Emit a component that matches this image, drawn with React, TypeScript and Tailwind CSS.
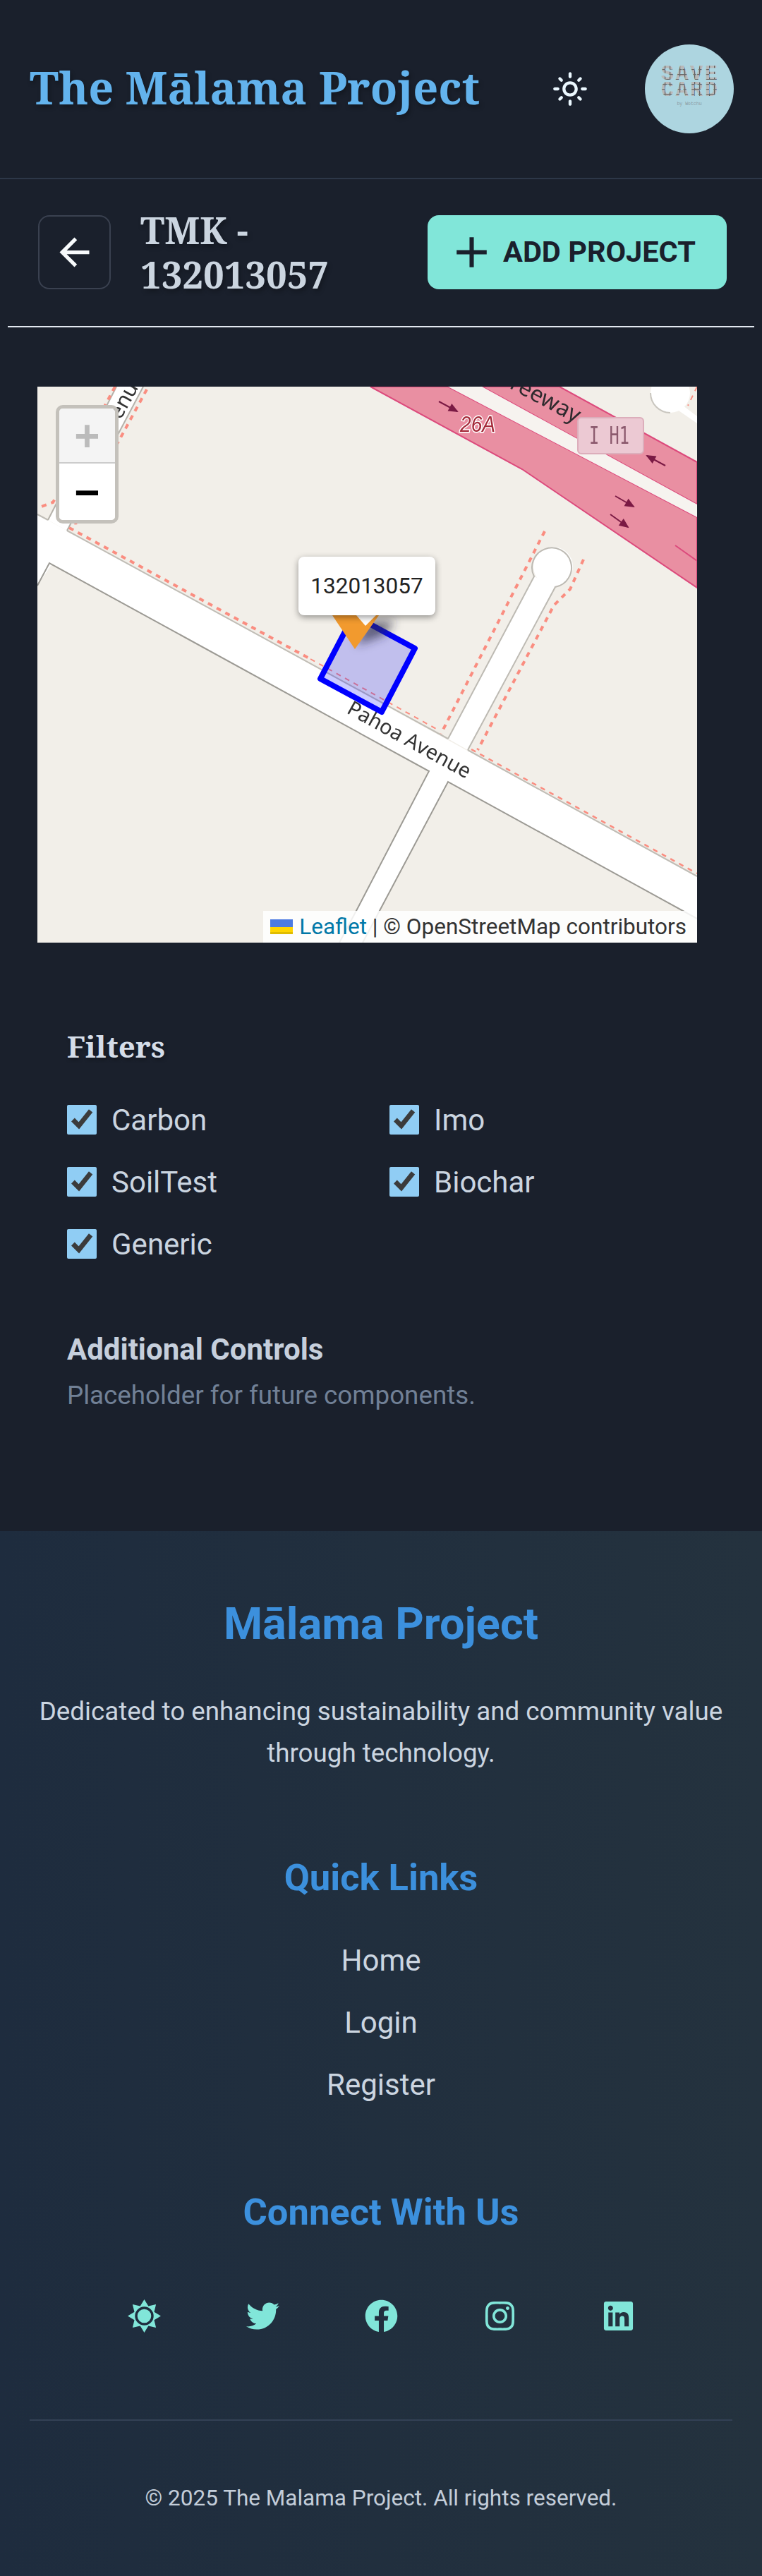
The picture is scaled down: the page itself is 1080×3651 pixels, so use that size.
import { MdOutlineLightMode, MdArrowBack, MdAdd } from "react-icons/md";
import { FaTwitter, FaFacebook, FaInstagram, FaLinkedin } from "react-icons/fa";

function Arrow({ x1, y1, x2, y2 }: { x1: number; y1: number; x2: number; y2: number }) {
  const a = Math.atan2(y2 - y1, x2 - x1);
  const p = (d: number, o: number) => `${x2 + Math.cos(a) * d - Math.sin(a) * o},${y2 + Math.sin(a) * d + Math.cos(a) * o}`;
  return (
    <g>
      <line x1={x1} y1={y1} x2={x2} y2={y2} stroke="#7a1a44" strokeWidth="2" />
      <polygon points={`${p(2, 0)} ${p(-12, 6)} ${p(-12, -6)}`} fill="#7a1a44" />
    </g>
  );
}

function SunBurst({ className }: { className?: string }) {
  const star = Array.from({ length: 16 }, (_, i) => {
    const r = i % 2 === 0 ? 24 : 15.5;
    const a = (i * Math.PI) / 8 - Math.PI / 2;
    return `${(r * Math.cos(a)).toFixed(2)},${(r * Math.sin(a)).toFixed(2)}`;
  });
  const ring = (r: number) => `M${-r},0 A${r},${r} 0 1 0 ${r},0 A${r},${r} 0 1 0 ${-r},0 Z`;
  return (
    <svg viewBox="-24 -24 48 48" className={className} fill="currentColor">
      <path fillRule="evenodd" d={`M${star.join(" L")} Z ${ring(13.5)} ${ring(10)}`} />
    </svg>
  );
}

function MapTiles() {
  return (
    <svg viewBox="53 548 935 788" className="absolute inset-0 w-full h-full blur-[0.7px]">
      <rect x="53" y="548" width="935" height="788" fill="#f2efe9" />
      {/* freeway */}
      <polygon points="525,548 635,548 988,733 988,833 740,665" fill="#e98fa2" stroke="#dc4a7c" strokeWidth="2" />
      <polygon points="683,548 793,548 988,655 988,715" fill="#e98fa2" stroke="#dc4a7c" strokeWidth="2" />
      <polygon points="635,548 683,548 988,715 988,733" fill="#f6f3ef" />
      <line x1="957" y1="773" x2="988" y2="795" stroke="#dc4a7c" strokeWidth="2" />
      {/* roads */}
      <g fill="#ffffff">
        <polygon points="53,729 988,1243 988,1303 53,789" />
        <polygon points="165,548 203,548 95,752 68,737" />
        <polygon points="53,770 80,790 53,830" />
        <polygon points="608,1093 635,1108 514,1336 481,1336" />
        <polygon points="635,1047 663,1063 787,832 757,817" />
        <circle cx="784" cy="803" r="28" />
        <circle cx="950" cy="557" r="28" />
        <polygon points="968,575 988,590 988,600 962,582" />
      </g>
      <g stroke="#a9a69f" strokeWidth="2" fill="none">
        <path d="M53,729 L68,737 M95,752 L635,1047 M663,1063 L988,1242" stroke="#c0bdb6" />
        <path d="M53,830 L70,798 L608,1093 L507,1287 L481,1336 M514,1336 L635,1108 L988,1302" stroke="#9c9a94" />
        <path d="M165,548 L68,737 M203,548 L95,752" stroke="#b5b2ab" />
        <path d="M635,1047 L757,817 A28,28 0 1 1 787,832 L663,1063" stroke="#bdbab3" />
        <path d="M950,585 A28,28 0 0 1 922,557" stroke="#c9c6bf" />
      </g>
      <g stroke="#fa8d80" fill="none" strokeWidth="4" strokeDasharray="7 7">
        <path d="M98,748 L440,934" />
        <path d="M440,934 L620,1034" strokeWidth="2" />
        <path d="M668,1062 L988,1238" strokeWidth="2.5" />
        <path d="M772,753 L625,1040" />
        <path d="M827,793 L808,835 L785,858 L677,1063" />
        <path d="M208,552 L107,738 L108,750" />
        <path d="M163,548 L82,700 L75,712 L53,720" />
        <path d="M988,548 L975,575" strokeWidth="2" />
      </g>
      <Arrow x1={622} y1={569} x2={648} y2={583} />
      <Arrow x1={872} y1={703} x2={898} y2={718} />
      <Arrow x1={865} y1={729} x2={890} y2={747} />
      <Arrow x1={943} y1={660} x2={917} y2={646} />
      <text x="652" y="612" fontFamily="'Liberation Sans',sans-serif" fontStyle="italic" fontSize="32" textLength="50" lengthAdjust="spacingAndGlyphs" fill="#a52a3a" stroke="#ffffff" strokeWidth="3" paintOrder="stroke">26A</text>
      <text x="816" y="600" textAnchor="end" transform="rotate(28 816 600)" fontFamily="'Noto Sans',sans-serif" fontSize="32" fill="#2f2a2e">Freeway</text>
      <rect x="819" y="592" width="93" height="51" rx="5" fill="#ecc9d3" stroke="#dcaebb" strokeWidth="2" />
      <text x="835" y="629" fontFamily="'DejaVu Sans Mono',monospace" fontSize="33" textLength="57" lengthAdjust="spacingAndGlyphs" fill="#8c5a6e">I H1</text>
      <text x="490" y="1010" transform="rotate(28.8 490 1010)" fontFamily="'Noto Sans',sans-serif" fontSize="29" fill="#333333" stroke="#ffffff" strokeWidth="3" paintOrder="stroke">Pahoa Avenue</text>
      <text x="154" y="626" transform="rotate(-61 154 626)" fontFamily="'Noto Sans',sans-serif" fontSize="30" fill="#333333" stroke="#ffffff" strokeWidth="3" paintOrder="stroke">Avenue</text>
    </svg>
  );
}

function MapOverlay() {
  return (
    <svg viewBox="53 548 935 788" className="absolute inset-0 w-full h-full">
      <defs>
        <filter id="sh" x="-50%" y="-50%" width="200%" height="200%">
          <feGaussianBlur stdDeviation="7" />
        </filter>
      </defs>
      <polygon points="454,962 541,1009 588,919 501,872" fill="#0000ff" fillOpacity="0.2" stroke="#0000ff" strokeWidth="8" strokeLinejoin="round" />
      <polygon points="505,915 520,880 560,880 545,900" fill="#2a2a40" fillOpacity="0.65" filter="url(#sh)" />
      <polygon points="471,872 537,872 503,920" fill="#f29a2e" />
      <polygon points="505,872 533,872 518,887" fill="#ffffff" />
    </svg>
  );
}

function Logo() {
  return (
    <svg viewBox="0 0 126 126" className="w-[126px] h-[126px] rounded-full shrink-0">
      <defs>
        <pattern id="px" width="7" height="7" patternUnits="userSpaceOnUse">
          <rect width="7" height="7" fill="#b8b8b8" />
          <rect width="1.2" height="7" fill="#5e5e5e" />
          <rect width="7" height="1.2" fill="#6a6a6a" />
        </pattern>
      </defs>
      <rect width="126" height="126" fill="#add5e0" />
      <g fontFamily="'Liberation Mono',monospace" fontWeight="700" fontSize="30" fill="url(#px)">
        <text x="23" y="50" textLength="80" lengthAdjust="spacing">SAVE</text>
        <text x="23" y="73" textLength="80" lengthAdjust="spacing">CARD</text>
      </g>
      <text x="63" y="86" textAnchor="middle" fontFamily="'Liberation Mono',monospace" fontSize="6.5" fill="#8a9aa2">by Wotchu</text>
    </svg>
  );
}

function Check({ label }: { label: string }) {
  return (
    <label className="flex items-center h-[88px] gap-[21px] text-[42px] text-[#cbd5e0]">
      <input type="checkbox" defaultChecked className="w-[42px] h-[42px] m-0 accent-[#90cdf4]" />
      <span>{label}</span>
    </label>
  );
}

export default function App() {
  return (
    <div className="w-full min-h-[3651px] bg-[#1a202c] font-['Roboto',sans-serif] text-[#cbd5e0]">
      <header className="flex items-center justify-between h-[254px] pl-[42px] pr-[40px] border-b-2 border-[#2d3748]">
        <h1 className="pb-[5px] font-['Noto_Serif',serif] font-bold text-[63px] leading-[76px] text-[#63b3ed] [text-shadow:2px_4px_6px_rgba(0,0,0,0.3)]">The Mālama Project</h1>
        <div className="flex items-center gap-[80px]">
          <MdOutlineLightMode className="text-[#ebf8ff] w-[52px] h-[52px]" />
          <Logo />
        </div>
      </header>

      <section className="flex items-center pt-[40px] pb-[42px] pl-[54px] pr-[50px]">
        <button className="flex items-center justify-center w-[103px] h-[105px] rounded-[16px] border-2 border-[#3a4150] shrink-0">
          <MdArrowBack className="text-[#f7fafc] w-[63px] h-[63px]" />
        </button>
        <h2 className="ml-[42px] w-[400px] font-['Noto_Serif',serif] font-bold text-[52.5px] leading-[63px] text-[#cbd5e0] [text-shadow:2px_4px_6px_rgba(0,0,0,0.3)]">TMK - 132013057</h2>
        <button className="ml-auto flex items-center justify-start pl-[26px] gap-[8px] w-[424px] h-[105px] rounded-[16px] bg-[#81e6d9] text-[#1a202c] text-[41.5px] font-bold uppercase shrink-0">
          <MdAdd className="w-[73px] h-[73px]" />
          <span>Add Project</span>
        </button>
      </section>

      <div className="mx-[11px] h-[2px] bg-[#e2e8f0]" />

      <div className="relative mt-[84px] ml-[53px] w-[935px] h-[788px] overflow-hidden">
        <MapTiles />
        <MapOverlay />

        <div className="absolute left-[26px] top-[26px] w-[89px] h-[168px] rounded-[10px] border-[5px] border-[#c4c1bb] overflow-hidden flex flex-col font-['DejaVu_Sans_Mono',monospace] font-bold text-[58px]">
          <div className="h-[78px] bg-[#f4f4f4] text-[#bbbbbb] flex items-center justify-center leading-none border-b-2 border-[#cccccc]">+</div>
          <div className="flex-1 bg-white text-black flex items-center justify-center leading-none">−</div>
        </div>

        <div className="absolute left-[370px] top-[241px] w-[194px] h-[83px] rounded-[8px] bg-white text-[#222222] text-[31.5px] flex items-center justify-center shadow-[0_3px_10px_rgba(0,0,0,0.4)]">132013057</div>

        <div className="absolute right-0 bottom-0 h-[45px] w-[615px] bg-white/85 flex items-center justify-end pr-[15px] text-[31.5px] text-[#333333] whitespace-pre">
          <span className="flex flex-col w-[32px] h-[21px] mr-[9px]">
            <span className="h-[11px] bg-[#4c7be1]" />
            <span className="h-[7px] bg-[#ffd500]" />
            <span className="h-[3px] bg-[#e0bc00]" />
          </span>
          <span className="text-[#0078a8]">Leaflet</span>
          <span> | © OpenStreetMap contributors</span>
        </div>
      </div>

      <section className="mt-[115px] pl-[95px] h-[719px]">
        <h3 className="font-['Noto_Serif',serif] font-bold text-[42px] leading-[63px] text-[#d5dde8] [text-shadow:2px_3px_5px_rgba(0,0,0,0.3)]">Filters</h3>
        <div className="grid grid-cols-[457px_1fr] mt-[29px]">
          <Check label="Carbon" />
          <Check label="Imo" />
          <Check label="SoilTest" />
          <Check label="Biochar" />
          <Check label="Generic" />
        </div>
        <h4 className="mt-[74px] font-bold text-[42px] leading-[63px] text-[#c6cfdc]">Additional Controls</h4>
        <p className="mt-[5px] text-[36.75px] leading-[58px] text-[#718096]">Placeholder for future components.</p>
      </section>

      <footer className="bg-gradient-to-r from-[#1e2c3e] to-[#24323e] h-[1481px] px-[42px] pt-[95px] text-center">
        <h2 className="font-bold text-[63px] leading-[74px] text-[#3c90dd]">Mālama Project</h2>
        <p className="mt-[57px] text-[36.75px] leading-[59px] text-[#cbd5e0]">Dedicated to enhancing sustainability and community value through technology.</p>
        <h3 className="mt-[116px] font-bold text-[52.5px] leading-[62px] text-[#3c90dd]">Quick Links</h3>
        <ul className="mt-[42px] text-[42px] text-[#cbd5e0]">
          <li className="h-[88px] flex items-center justify-center">Home</li>
          <li className="h-[88px] flex items-center justify-center">Login</li>
          <li className="h-[88px] flex items-center justify-center">Register</li>
        </ul>
        <h3 className="mt-[106px] font-bold text-[52.5px] leading-[62px] text-[#3c90dd]">Connect With Us</h3>
        <div className="mt-[93px] flex justify-center text-[#81e6d9]">
          {[SunBurst, FaTwitter, FaFacebook, FaInstagram, FaLinkedin].map((I, i) => (
            <span key={i} className="w-[168px] flex justify-center">
              <I className="w-[47px] h-[47px]" />
            </span>
          ))}
        </div>
        <div className="mt-[123px] h-[2px] bg-[#334155]" />
        <p className="mt-[85px] text-[31.5px] leading-[50px] text-[#c3cdd9]">© 2025 The Malama Project. All rights reserved.</p>
      </footer>
    </div>
  );
}
